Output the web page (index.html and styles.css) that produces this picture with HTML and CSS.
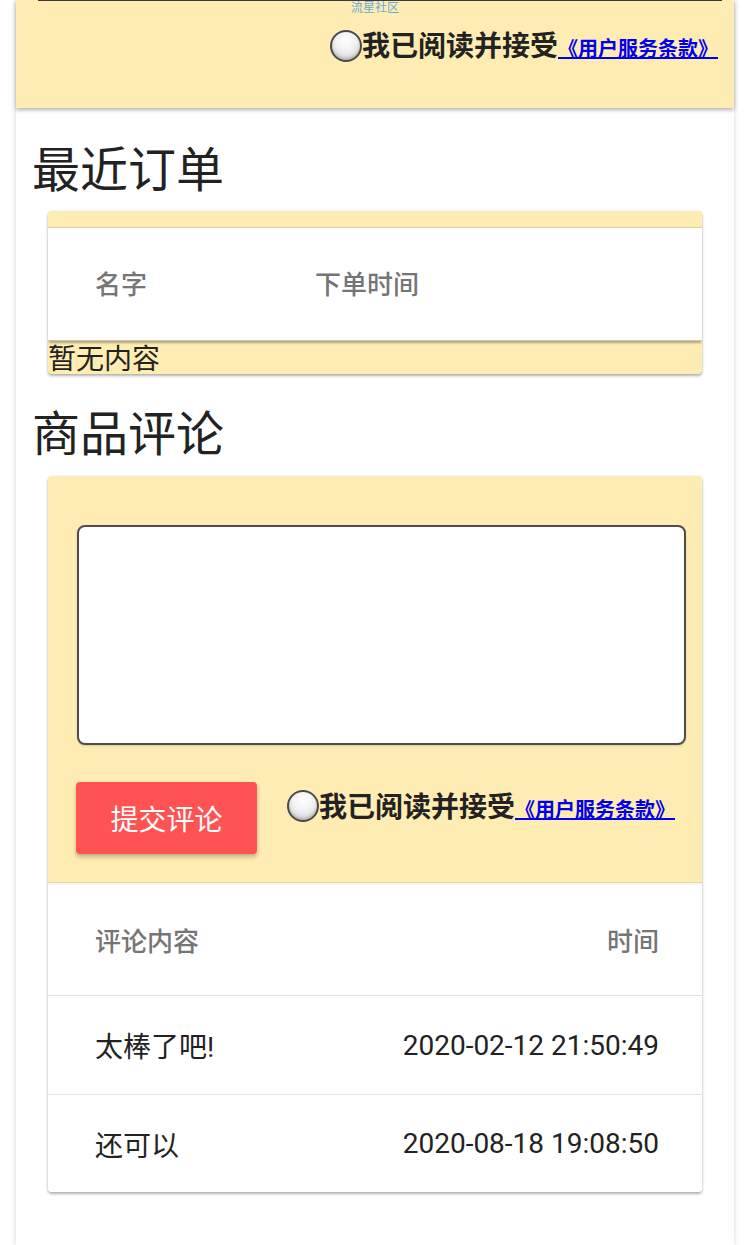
FILE: index.html
```html
<!DOCTYPE html>
<html lang="zh">
<head>
<meta charset="utf-8">
<title>商品详情</title>
<link rel="stylesheet" href="styles.css">
</head>
<body>
<div class="page">
  <div class="topbar">
    <div class="top-line"></div>
    <div class="brand">流星社区</div>
    <div class="agree-row">
      <label class="agree">
        <span class="radio"></span>
        <span class="agree-text">我已阅读并接受<a class="terms" href="#">《用户服务条款》 </a></span>
      </label>
    </div>
  </div>

  <h2 class="section-title">最近订单</h2>
  <div class="card orders">
    <div class="orders-strip"></div>
    <div class="orders-head">
      <div class="th col-name">名字</div>
      <div class="th">下单时间</div>
    </div>
    <div class="empty">暂无内容</div>
  </div>

  <h2 class="section-title second">商品评论</h2>
  <div class="card comments">
    <div class="comment-form">
      <textarea class="comment-input"></textarea>
      <div class="form-actions">
        <button class="submit-btn" type="button">提交评论</button>
        <label class="agree small">
          <span class="radio"></span>
          <span class="agree-text">我已阅读并接受<a class="terms" href="#">《用户服务条款》</a></span>
        </label>
      </div>
    </div>
    <div class="ctable">
      <div class="crow chead">
        <div class="cc">评论内容</div>
        <div class="cc right">时间</div>
      </div>
      <div class="crow">
        <div class="cc">太棒了吧!</div>
        <div class="cc right">2020-02-12 21:50:49</div>
      </div>
      <div class="crow last">
        <div class="cc">还可以</div>
        <div class="cc right">2020-08-18 19:08:50</div>
      </div>
    </div>
  </div>
</div>
</body>
</html>
```
FILE: styles.css
```css
* { box-sizing: border-box; }
html, body { margin: 0; padding: 0; background: #ffffff; }
body {
  font-family: Roboto, "Noto Sans CJK SC", sans-serif;
  color: #222222;
}
.page {
  margin: 0 16px;
  width: 718px;
  min-height: 1245px;
  background: #ffffff;
  box-shadow: 0 0 6px rgba(0,0,0,0.16);
  padding-bottom: 40px;
}
.topbar {
  position: relative;
  z-index: 2;
  height: 108px;
  background: #ffecb3;
  box-shadow: 0 2px 4px rgba(0,0,0,0.3);
}
.top-line {
  margin: 0 12px 0 22px;
  height: 1px;
  background: #3a3a3a;
}
.brand {
  text-align: center;
  font-family: "Noto Sans CJK SC", sans-serif;
  font-size: 12px;
  line-height: 12px;
  color: #6aaad8;
}
.agree-row {
  display: flex;
  justify-content: flex-end;
  padding-right: 16px;
  margin-top: 14px;
}
.agree {
  display: flex;
  align-items: center;
  font-family: "Noto Sans CJK SC", sans-serif;
}
.radio {
  width: 32px;
  height: 32px;
  border-radius: 50%;
  border: 2px solid #4a4a4a;
  background: radial-gradient(circle at 50% 30%, #ffffff 0%, #f0f0f0 45%, #c9c9c9 100%);
  box-shadow: inset 0 -2px 3px rgba(0,0,0,0.18);
  flex: none;
}
.agree-text {
  font-size: 28px;
  font-weight: 700;
  line-height: 34px;
  color: #222222;
}
.terms {
  font-size: 20px;
  font-weight: 700;
  color: #0000ee;
  text-decoration: underline;
}
.section-title {
  margin: 30px 0 0 16px;
  font-family: "Noto Sans CJK SC", sans-serif;
  font-size: 48px;
  font-weight: 400;
  line-height: 56px;
  color: #222222;
}
.section-title.second { margin-top: 28px; }
.card {
  margin: 17px 32px 0 32px;
  border-radius: 4px;
  box-shadow: 0 2px 3px rgba(0,0,0,0.3), 0 0 2px rgba(0,0,0,0.08);
}
.orders { background: #ffecb3; }
.orders-strip {
  height: 17px;
  border-radius: 4px 4px 0 0;
  border-bottom: 1px solid #e3cf93;
}
.orders-head {
  display: flex;
  align-items: center;
  height: 113px;
  background: #ffffff;
  padding-left: 47px;
  padding-bottom: 4px;
  box-shadow: 0 3px 2px -1px rgba(0,0,0,0.3);
  border-bottom: 1px solid #cfc6b0;
  position: relative;
}
.th {
  font-family: "Noto Sans CJK SC", sans-serif;
  font-size: 26px;
  font-weight: 500;
  color: #757575;
}
.col-name { width: 220px; }
.empty {
  font-family: "Noto Sans CJK SC", sans-serif;
  font-size: 28px;
  line-height: 33px;
  height: 33px;
  color: #222222;
}
.comments {
  margin-top: 18px;
  background: #ffffff;
  overflow: hidden;
}
.comment-form {
  background: #ffecb3;
  padding: 49px 17px 28px 28px;
  border-bottom: 1px solid #e6d9a8;
  box-shadow: 0 1px 2px rgba(0,0,0,0.08);
  position: relative;
}
.comment-input {
  display: block;
  width: 609px;
  height: 220px;
  margin-left: 1px;
  border: 2px solid #4d4d4d;
  border-radius: 8px;
  background: #ffffff;
  resize: none;
  box-shadow: 0 1px 2px rgba(0,0,0,0.15);
}
.form-actions {
  display: flex;
  align-items: flex-start;
  margin-top: 37px;
}
.submit-btn {
  width: 181px;
  height: 72px;
  border: none;
  border-radius: 4px;
  background: #ff5252;
  color: #ffffff;
  font-family: "Noto Sans CJK SC", sans-serif;
  font-size: 28px;
  box-shadow: 0 3px 4px rgba(0,0,0,0.25);
  padding: 0;
}
.agree.small {
  margin-left: 30px;
  margin-top: 1px;
}
.agree.small .agree-text { line-height: 40px; margin-top: 2px; }
.ctable { background: #ffffff; }
.crow {
  display: flex;
  justify-content: space-between;
  align-items: center;
  height: 99px;
  padding: 0 43px 0 47px;
  border-bottom: 1px solid #e2e2e2;
  font-size: 28px;
  color: #222222;
}
.crow.chead {
  height: 113px;
  font-family: "Noto Sans CJK SC", sans-serif;
  font-size: 26px;
  font-weight: 500;
  color: #757575;
}
.crow.last { border-bottom: none; height: 97px; }
```
